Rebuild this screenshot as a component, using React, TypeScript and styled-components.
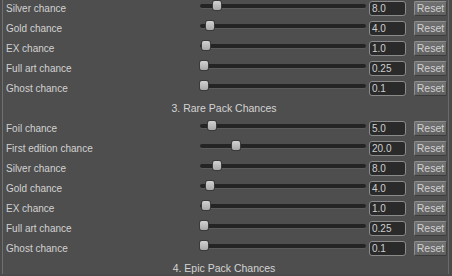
import React from 'react';
import styled, { createGlobalStyle } from 'styled-components';

const GlobalStyle = createGlobalStyle`
  html, body {
    margin: 0;
    padding: 0;
    background: #4b4b4b;
    overflow: hidden;
  }
`;

const Frame = styled.div`
  width: 452px;
  height: 276px;
  padding-left: 2px;
  box-sizing: border-box;
  overflow: hidden;
  background: #4b4b4b;
  font-family: "Liberation Sans", Arial, sans-serif;
`;

const Panel = styled.div`
  width: 447px;
  height: 100%;
  box-sizing: border-box;
  border-left: 1px solid #707070;
  border-right: 1px solid #6a6a6a;
  background: #4e4e4e;
`;

const List = styled.div`
  margin-top: -2px;
  display: flex;
  flex-direction: column;
`;

const Row = styled.div`
  height: 20px;
  display: flex;
  align-items: center;
`;

const Label = styled.div`
  flex: none;
  width: 194px;
  padding-left: 3px;
  font-size: 10px;
  color: #d2d2d2;
  white-space: nowrap;
`;

const SliderWrap = styled.div`
  flex: none;
  width: 166px;
  height: 20px;
  margin-right: 3px;
  display: flex;
  align-items: center;
  padding-bottom: 5px;
  box-sizing: border-box;
`;

const Track = styled.div`
  position: relative;
  width: 100%;
  height: 4px;
  border-radius: 2px;
  background: #242424;
  box-shadow: 0 1px 0 #5c5c5c;
`;

const Thumb = styled.div`
  position: absolute;
  top: -3px;
  width: 8px;
  height: 9px;
  border-radius: 2px;
  background: linear-gradient(#d2d2d2, #a8a8a8);
  box-shadow: 0 0 0 1px #3a3a3a;
`;

const ValueBox = styled.div`
  flex: none;
  width: 37px;
  height: 15px;
  box-sizing: border-box;
  margin-right: 8px;
  padding-left: 2px;
  border: 1px solid #8a8a8a;
  border-radius: 3px;
  background: #2a2a2a;
  color: #cfcfcf;
  font-size: 10px;
  line-height: 13px;
`;

const ResetButton = styled.div`
  flex: none;
  width: 33px;
  height: 15px;
  box-sizing: border-box;
  border: 1px solid #8e8e8e;
  border-bottom-color: #3c3c3c;
  border-right-color: #444;
  border-radius: 2px;
  background: linear-gradient(#717171, #616161);
  color: #d0d0d0;
  font-size: 10.5px;
  line-height: 13px;
  text-align: center;
`;

const Header = styled.div`
  height: 20px;
  display: flex;
  align-items: center;
  justify-content: center;
  padding-right: 3px;
  font-size: 10.5px;
  color: #d4d4d4;
`;

type Item = { label: string; value: string };

const Slider = ({ value }: { value: number }) => (
  <SliderWrap>
    <Track>
      <Thumb style={{ left: `${(value / 100) * 158}px` }} />
    </Track>
  </SliderWrap>
);

const ChanceRow = ({ label, value }: Item) => (
  <Row>
    <Label>{label}</Label>
    <Slider value={parseFloat(value)} />
    <ValueBox>{value}</ValueBox>
    <ResetButton>Reset</ResetButton>
  </Row>
);

const topRows: Item[] = [
  { label: 'Silver chance', value: '8.0' },
  { label: 'Gold chance', value: '4.0' },
  { label: 'EX chance', value: '1.0' },
  { label: 'Full art chance', value: '0.25' },
  { label: 'Ghost chance', value: '0.1' },
];

const rareRows: Item[] = [
  { label: 'Foil chance', value: '5.0' },
  { label: 'First edition chance', value: '20.0' },
  { label: 'Silver chance', value: '8.0' },
  { label: 'Gold chance', value: '4.0' },
  { label: 'EX chance', value: '1.0' },
  { label: 'Full art chance', value: '0.25' },
  { label: 'Ghost chance', value: '0.1' },
];

export default function App() {
  return (
    <>
      <GlobalStyle />
      <Frame>
        <Panel>
          <List>
            {topRows.map((r, i) => (
              <ChanceRow key={'t' + i} {...r} />
            ))}
            <Header>3. Rare Pack Chances</Header>
            {rareRows.map((r, i) => (
              <ChanceRow key={'r' + i} {...r} />
            ))}
            <Header>4. Epic Pack Chances</Header>
          </List>
        </Panel>
      </Frame>
    </>
  );
}
